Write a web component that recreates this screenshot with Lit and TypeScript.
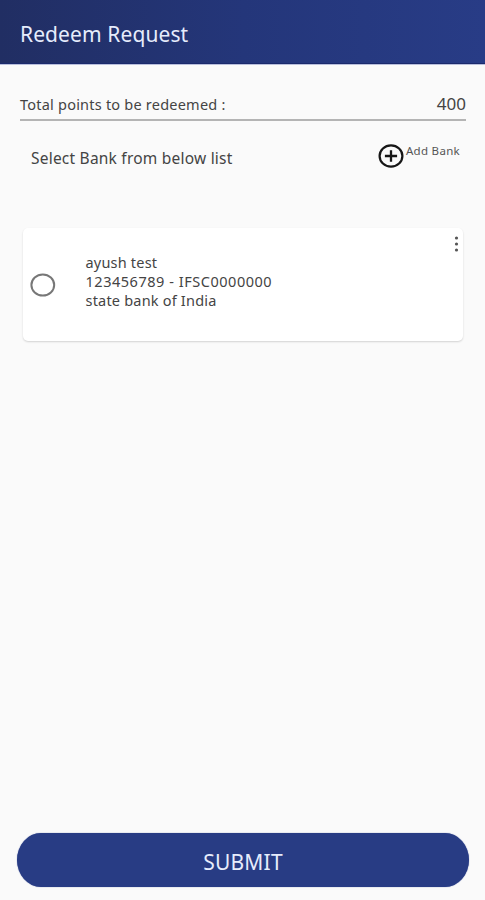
import { LitElement, html, css } from "lit";
import { customElement, state } from "lit/decorators.js";

interface BankAccount {
  holder: string;
  account: string;
  ifsc: string;
  bank: string;
}

@customElement("app-root")
export class AppRoot extends LitElement {
  @state() private points = 400;
  @state() private banks: BankAccount[] = [
    { holder: "ayush test", account: "123456789", ifsc: "IFSC0000000", bank: "state bank of India" },
  ];

  static styles = css`
    :host {
      display: flex;
      flex-direction: column;
      height: 900px;
      box-sizing: border-box;
      background: #fafafa;
      color: #444;
      font-family: "Noto Sans", "Open Sans", sans-serif;
      overflow: hidden;
    }
    header {
      flex: none;
      height: 64px;
      box-sizing: border-box;
      padding: 4px 21px 0 20px;
      display: flex;
      align-items: center;
      background: linear-gradient(90deg, #212e63 0%, #24367a 50%, #283c86 100%);
      border-bottom: 1px solid #1b2a6c;
      box-shadow: 0 1px 0 #b9bfdc;
    }
    h1 {
      margin: 0;
      color: #e6ecfc;
      font-size: 21px;
      font-weight: 400;
      line-height: 28px;
      letter-spacing: 0.1px;
      white-space: nowrap;
    }
    .total {
      flex: none;
      margin: 27px 19px 0 20px;
      height: 30px;
      box-sizing: border-box;
      border-bottom: 2px solid #b4b4b4;
      display: flex;
      justify-content: space-between;
      align-items: flex-start;
      line-height: 26px;
      white-space: nowrap;
    }
    .label { font-size: 14.5px; line-height: 27px; letter-spacing: 0.22px; }
    .value { font-size: 17px; }
    .pick {
      flex: none;
      margin: 22px 25px 0 31px;
      height: 28px;
      display: flex;
      justify-content: space-between;
      white-space: nowrap;
    }
    .prompt { font-size: 15.5px; line-height: 30px; letter-spacing: 0.22px; }
    .add { display: flex; font-size: 11.5px; line-height: 16px; letter-spacing: 0.3px; color: #555; }
    .add svg { display: block; width: 26px; height: 26px; margin-right: 2px; }
    .card {
      flex: none;
      position: relative;
      margin: 57px 22px 0 23px;
      height: 113px;
      border-radius: 5px;
      background: #fff;
      box-shadow: 0 1px 2px rgba(0, 0, 0, 0.16);
      display: flex;
      align-items: center;
    }
    .radio { display: block; width: 26px; height: 24px; margin-left: 7px; }
    .details {
      margin-left: 29.5px;
      margin-top: -7px;
      font-size: 14.5px;
      line-height: 19px;
      letter-spacing: 0.2px;
      white-space: nowrap;
    }
    .number { letter-spacing: 0.53px; }
    .menu { position: absolute; top: 7px; right: 4.5px; width: 5px; height: 18px; }
    .submit {
      flex: none;
      margin: auto 16px 13px 17px;
      height: 54px;
      border: none;
      border-radius: 24px / 27px;
      background: #283c84;
      color: #e6ecfc;
      font: 400 21px/50px "Noto Sans", "Open Sans", sans-serif;
      letter-spacing: 0.2px;
      padding: 4px 0 0;
      box-shadow: 0 0 1px #4a5c9c;
    }
  `;

  render() {
    return html`
      <header><h1>Redeem Request</h1></header>
      <div class="total">
        <span class="label">Total points to be redeemed :</span>
        <span class="value">${this.points}</span>
      </div>
      <div class="pick">
        <span class="prompt">Select Bank from below list</span>
        <div class="add">
          <svg viewBox="0 0 26 26" fill="none" stroke="#161616">
            <ellipse cx="13" cy="13" rx="11.4" ry="10.7" stroke-width="2.2" />
            <path d="M13 7.3v11.4M6.9 13h12.2" stroke-width="2.3" />
          </svg>
          <span>Add Bank</span>
        </div>
      </div>
      ${this.banks.map(
        (b) => html`
          <div class="card">
            <svg class="radio" viewBox="0 0 26 24" fill="none" stroke="#777">
              <ellipse cx="12.8" cy="12" rx="11.4" ry="10.6" stroke-width="2" />
            </svg>
            <div class="details">
              <div>${b.holder}</div>
              <div class="number">${b.account} - ${b.ifsc}</div>
              <div>${b.bank}</div>
            </div>
            <svg class="menu" viewBox="0 0 5 18" fill="#555">
              <circle cx="2.5" cy="3" r="1.6" />
              <circle cx="2.5" cy="9" r="1.6" />
              <circle cx="2.5" cy="15" r="1.6" />
            </svg>
          </div>
        `,
      )}
      <button class="submit">SUBMIT</button>
    `;
  }
}
